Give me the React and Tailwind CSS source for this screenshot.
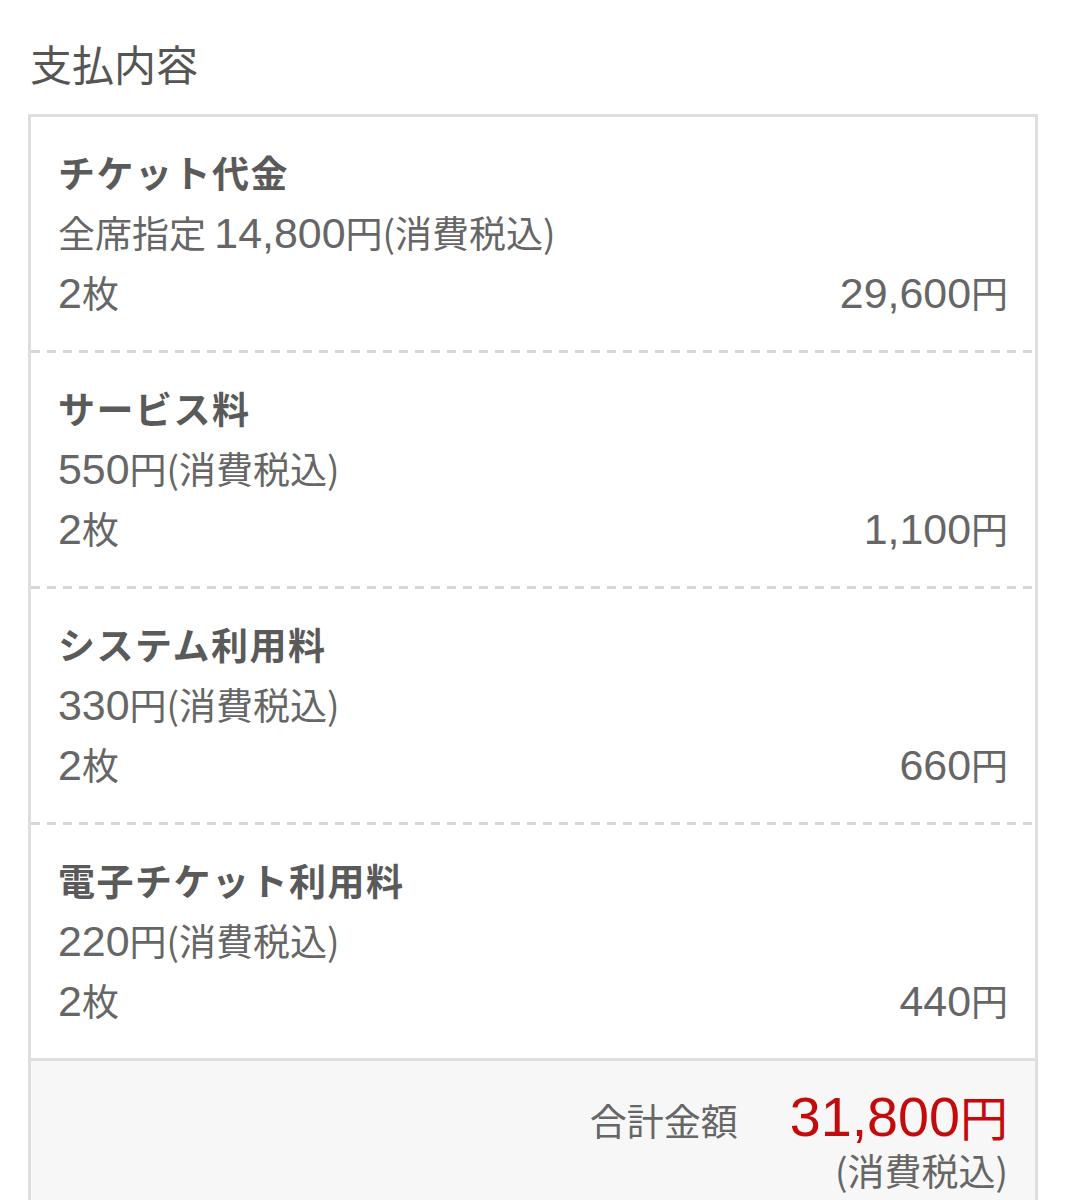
import React from 'react';

const items = [
  { title: 'チケット代金', desc: '全席指定 14,800円(消費税込)', qty: '2枚', amount: '29,600円' },
  { title: 'サービス料', desc: '550円(消費税込)', qty: '2枚', amount: '1,100円' },
  { title: 'システム利用料', desc: '330円(消費税込)', qty: '2枚', amount: '660円' },
  { title: '電子チケット利用料', desc: '220円(消費税込)', qty: '2枚', amount: '440円' },
];

// 数字部分だけ Helvetica 系の幅・高さに寄せる
const Num = ({ children }) =>
  String(children)
    .split(/([\d,]+)/)
    .map((part, i) =>
      /^[\d,]+$/.test(part) ? (
        <span key={i} className="font-['Liberation_Sans'] text-[1.16em] leading-[0]">
          {part}
        </span>
      ) : (
        <React.Fragment key={i}>{part}</React.Fragment>
      )
    );

const Dashed = () => (
  <div className="h-[3px] bg-[repeating-linear-gradient(90deg,#d6d6d6_0_9px,transparent_9px_16px)]" />
);

export default function App() {
  return (
    <div
      className="min-h-[1200px] bg-white pl-[28px] pr-[28px] text-[#666]"
      style={{ fontFamily: '"Noto Sans CJK JP", "Noto Sans", sans-serif' }}
    >
      <h1 className="pt-[33px] pl-[2px] text-[42px] leading-[60px] font-normal text-[#555] mb-[21px]">支払内容</h1>

      <div className="border-[3px] border-[#dedede] border-b-0">
        {items.map((item, i) => (
          <React.Fragment key={item.title}>
            {i > 0 && <Dashed />}
            <div className="pl-[27px] pr-[27px] pt-[25px] pb-[28px] text-[37px] leading-[60px]">
              <div className="font-bold text-[#5a5a5a] tracking-[1.5px]">{item.title}</div>
              <div>
                <Num>{item.desc}</Num>
              </div>
              <div className="flex justify-between">
                <span>
                  <Num>{item.qty}</Num>
                </span>
                <span>
                  <Num>{item.amount}</Num>
                </span>
              </div>
            </div>
          </React.Fragment>
        ))}

        {/* 合計 */}
        <div className="border-t-[3px] border-[#dedede] bg-[#f7f7f7] pt-[28px] pb-[40px] pr-[27px]">
          <div className="flex justify-end items-baseline gap-[52px] leading-[52px]">
            <span className="text-[37px]">合計金額</span>
            <span className="text-[48px] text-[#c40a0a]">
              <Num>31,800円</Num>
            </span>
          </div>
          <div className="text-right text-[37px] leading-[48px]">(消費税込)</div>
        </div>
      </div>
    </div>
  );
}
